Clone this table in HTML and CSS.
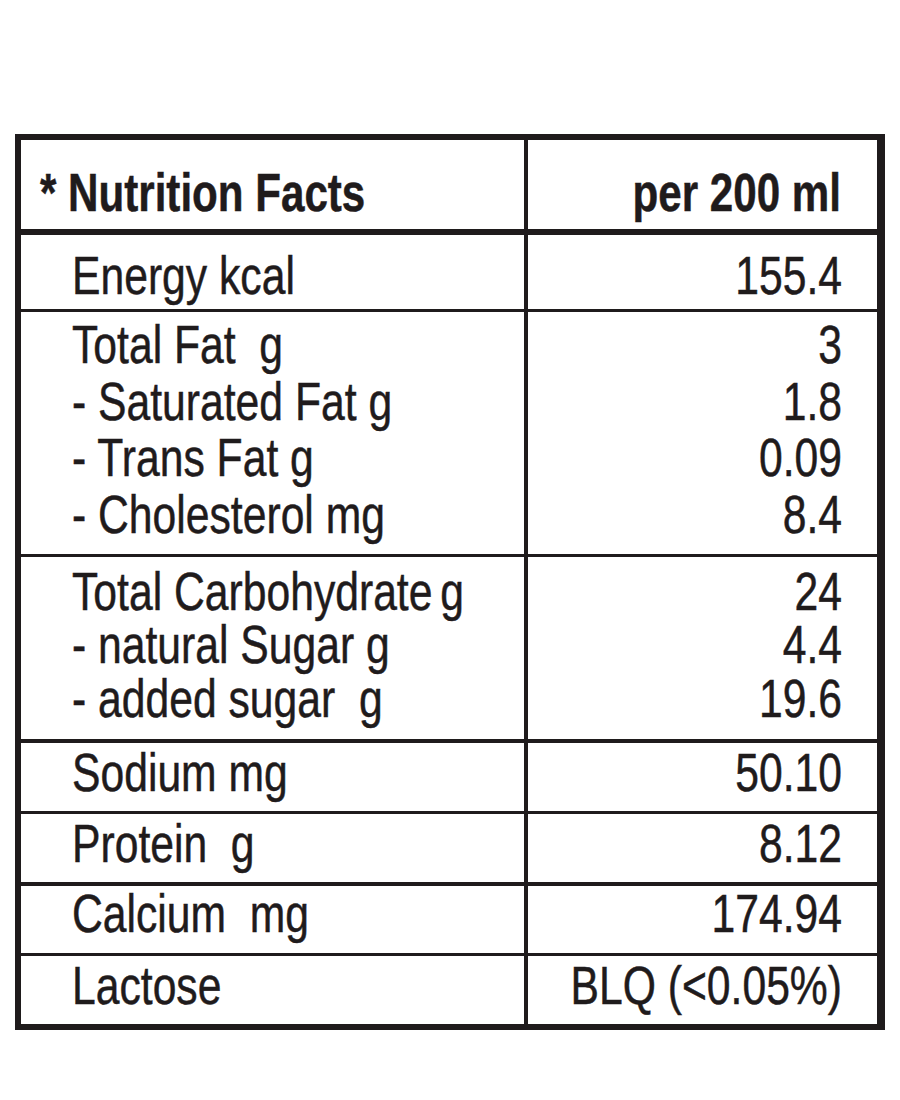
FILE: index.html
```html
<!DOCTYPE html>
<html lang="en">
<head>
<meta charset="utf-8">
<title>Nutrition Facts</title>
<link rel="stylesheet" href="styles.css">
</head>
<body>
<div class="facts">
  <div class="row row-head">
    <div class="cell cell-label"><div class="ln">* Nutrition Facts</div></div>
    <div class="cell cell-value"><div class="ln">per 200 ml</div></div>
  </div>
  <div class="row row-energy">
    <div class="cell cell-label"><div class="ln">Energy kcal</div></div>
    <div class="cell cell-value"><div class="ln">155.4</div></div>
  </div>
  <div class="row row-fat">
    <div class="cell cell-label">
      <div class="ln">Total Fat&nbsp; g</div>
      <div class="ln">- Saturated Fat g</div>
      <div class="ln">- Trans Fat g</div>
      <div class="ln">- Cholesterol mg</div>
    </div>
    <div class="cell cell-value">
      <div class="ln">3</div>
      <div class="ln">1.8</div>
      <div class="ln">0.09</div>
      <div class="ln">8.4</div>
    </div>
  </div>
  <div class="row row-carb">
    <div class="cell cell-label">
      <div class="ln">Total Carbohydrate<span class="tight"> </span>g</div>
      <div class="ln">- natural Sugar g</div>
      <div class="ln">- added sugar&nbsp; g</div>
    </div>
    <div class="cell cell-value">
      <div class="ln">24</div>
      <div class="ln">4.4</div>
      <div class="ln">19.6</div>
    </div>
  </div>
  <div class="row row-sodium">
    <div class="cell cell-label"><div class="ln">Sodium mg</div></div>
    <div class="cell cell-value"><div class="ln">50.10</div></div>
  </div>
  <div class="row row-protein">
    <div class="cell cell-label"><div class="ln">Protein&nbsp; g</div></div>
    <div class="cell cell-value"><div class="ln">8.12</div></div>
  </div>
  <div class="row row-calcium">
    <div class="cell cell-label"><div class="ln">Calcium&nbsp; mg</div></div>
    <div class="cell cell-value"><div class="ln">174.94</div></div>
  </div>
  <div class="row row-lactose">
    <div class="cell cell-label"><div class="ln">Lactose</div></div>
    <div class="cell cell-value"><div class="ln">BLQ (&lt;0.05%)</div></div>
  </div>
</div>
</body>
</html>
```
FILE: styles.css
```css
html, body {
  margin: 0;
  padding: 0;
  background: #ffffff;
}

body {
  font-family: "Liberation Sans", Arial, sans-serif;
  color: #1f1b1c;
}

.facts {
  box-sizing: border-box;
  margin: 134px 0 0 15px;
  width: 870px;
  border-style: solid;
  border-color: #1f1b1c;
  border-width: 6px 8px 6px 6px;
}

.row {
  display: flex;
  box-sizing: border-box;
  border-bottom: 3px solid #1f1b1c;
}

.cell {
  box-sizing: border-box;
  font-size: 54px;
  line-height: 54px;
  white-space: nowrap;
  min-width: 0;
}

.cell-label {
  flex: 0 0 507px;
  width: 507px;
  padding-left: 51px;
  border-right: 4px solid #1f1b1c;
}

.cell-value {
  flex: 1 1 0;
  padding-right: 35px;
}

.ln {
  transform: scaleX(0.79);
  -webkit-text-stroke: 0.5px #1f1b1c;
}

.tight {
  word-spacing: -5px;
}

.cell-label .ln {
  transform-origin: left center;
}

.cell-value .ln {
  display: flex;
  justify-content: flex-end;
  transform-origin: right center;
}

/* header */
.row-head {
  height: 95px;
  border-bottom-width: 6px;
}

.row-head .cell {
  font-weight: 700;
  padding-top: 25px;
}

.row-head .cell-label {
  padding-left: 19px;
}

.row-head .ln {
  transform: scaleX(0.78);
}

.row-head .cell-value {
  padding-right: 36px;
}

.row-energy {
  height: 77px;
}
.row-energy .cell {
  padding-top: 13px;
}

.row-fat {
  height: 245px;
}
.row-fat .cell {
  padding-top: 4px;
  line-height: 56.7px;
}

.row-carb {
  height: 186px;
  border-bottom-width: 4px;
}
.row-carb .cell {
  padding-top: 8px;
  line-height: 53.3px;
}

.row-sodium {
  height: 71px;
}
.row-sodium .cell {
  padding-top: 2px;
}

.row-protein {
  height: 72px;
  border-bottom-width: 4px;
}
.row-protein .cell {
  padding-top: 2px;
}

.row-calcium {
  height: 70px;
}
.row-calcium .cell {
  padding-top: 0;
}

.row-lactose {
  height: 68px;
  border-bottom: 0;
}
.row-lactose .cell {
  padding-top: 2px;
}
```
